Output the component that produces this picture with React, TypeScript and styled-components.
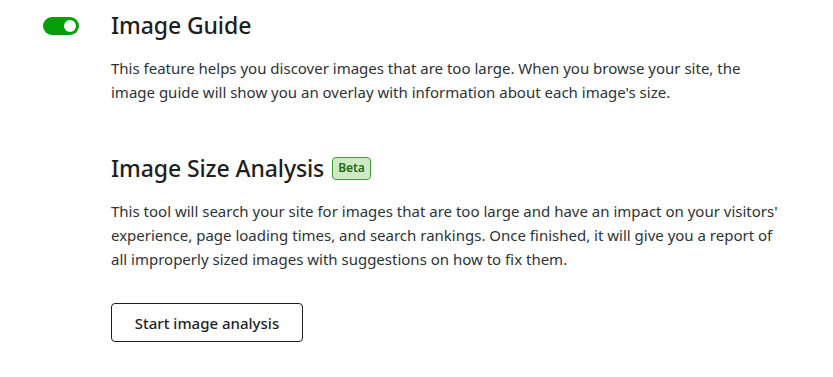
import styled, { createGlobalStyle } from 'styled-components'
import { FC, PropsWithChildren, useState } from 'react'

const GlobalStyle = createGlobalStyle`
  html, body {
    margin: 0;
    background: #ffffff;
  }
  body {
    font-family: 'Noto Sans', 'Open Sans', sans-serif;
    color: #1e1e1e;
  }
`

const Page = styled.div`
  width: 833px;
  padding: 9px 0 0;
`

const Section = styled.section<{ $gap: number }>`
  display: grid;
  grid-template-columns: 111px 1fr;
  padding-right: 50px;
  margin-bottom: ${({ $gap }) => $gap}px;
`

const Aside = styled.div`
  display: flex;
  justify-content: flex-start;
  padding: 8px 0 0 43px;
`

const Toggle = styled.button<{ $on: boolean }>`
  position: relative;
  width: 36px;
  height: 18px;
  padding: 0;
  border: none;
  border-radius: 9px;
  background: ${({ $on }) => ($on ? '#069e08' : '#8c8f94')};
  cursor: pointer;
  &::after {
    content: '';
    position: absolute;
    top: 3px;
    left: ${({ $on }) => ($on ? '21px' : '3px')};
    width: 12px;
    height: 12px;
    border-radius: 50%;
    background: #ffffff;
  }
`

const Title = styled.h2`
  display: flex;
  align-items: center;
  gap: 8px;
  margin: 0;
  font-size: 23px;
  font-weight: 500;
  line-height: 32px;
  color: #1e1e1e;
  letter-spacing: -0.1px;
`

const Badge = styled.span`
  display: inline-flex;
  align-items: center;
  height: 21px;
  padding: 0 5px;
  border: 1px solid #3f9b3a;
  border-radius: 4px;
  background: #d0e8c4;
  color: #1b6b1e;
  font-size: 12px;
  font-weight: 600;
  line-height: 1;
`

const Text = styled.p`
  margin: 15px 0 0;
  font-size: 15px;
  line-height: 24px;
  color: #2c3338;
  max-width: 672px;
`

const Button = styled.button`
  margin-top: 32px;
  width: 192px;
  height: 39px;
  border: 1.5px solid #1e1e1e;
  border-radius: 4px;
  background: #ffffff;
  font-family: inherit;
  font-size: 15px;
  font-weight: 500;
  color: #1e1e1e;
  cursor: pointer;
`

const Block: FC<PropsWithChildren<{ gap: number; aside?: React.ReactNode }>> = ({ gap, aside, children }) => (
  <Section $gap={gap}>
    <Aside>{aside}</Aside>
    <div>{children}</div>
  </Section>
)

export default function App() {
  const [on, setOn] = useState(true)
  return (
    <>
      <GlobalStyle />
      <Page>
        <Block gap={48} aside={<Toggle $on={on} onClick={() => setOn(!on)} aria-label="Image Guide" />}>
          <Title>Image Guide</Title>
          <Text>
            This feature helps you discover images that are too large. When you browse your site, the image guide will
            show you an overlay with information about each image's size.
          </Text>
        </Block>
        <Block gap={0}>
          <Title>
            Image Size Analysis <Badge>Beta</Badge>
          </Title>
          <Text>
            This tool will search your site for images that are too large and have an impact on your visitors'
            experience, page loading times, and search rankings. Once finished, it will give you a report of all
            improperly sized images with suggestions on how to fix them.
          </Text>
          <Button>Start image analysis</Button>
        </Block>
      </Page>
    </>
  )
}
